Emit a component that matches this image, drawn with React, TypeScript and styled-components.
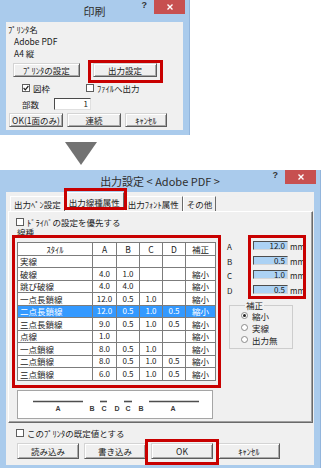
import React from "react";
import styled, { createGlobalStyle } from "styled-components";

const FRAME = "#aacbec";
const FACE = "#f0f0f0";
const MARK = "#c80000";

const GlobalStyle = createGlobalStyle`
  * { box-sizing: border-box; }
  html, body { margin: 0; padding: 0; background: #ffffff; }
  body {
    font-family: "Noto Sans CJK JP", "Noto Sans", sans-serif;
    font-size: 8.5px;
    color: #1b1b1b;
  }
`;

interface LineRow {
  name: string;
  vals: string[];
  fix: string;
  sel?: boolean;
}

const lineRows: LineRow[] = [
  { name: "実線", vals: ["", "", "", ""], fix: "" },
  { name: "破線", vals: ["4.0", "1.0", "", ""], fix: "縮小" },
  { name: "跳び破線", vals: ["4.0", "4.0", "", ""], fix: "縮小" },
  { name: "一点長鎖線", vals: ["12.0", "0.5", "1.0", ""], fix: "縮小" },
  { name: "二点長鎖線", vals: ["12.0", "0.5", "1.0", "0.5"], fix: "縮小", sel: true },
  { name: "三点長鎖線", vals: ["9.0", "0.5", "1.0", "0.5"], fix: "縮小" },
  { name: "点線", vals: ["1.0", "", "", ""], fix: "縮小" },
  { name: "一点鎖線", vals: ["8.0", "0.5", "1.0", ""], fix: "縮小" },
  { name: "二点鎖線", vals: ["8.0", "0.5", "1.0", "0.5"], fix: "縮小" },
  { name: "三点鎖線", vals: ["6.0", "0.5", "1.0", "0.5"], fix: "縮小" },
];

const sizes = [
  { key: "A", value: "12.0" },
  { key: "B", value: "0.5" },
  { key: "C", value: "1.0" },
  { key: "D", value: "0.5" },
];

const App: React.FC = () => {
  return (
    <>
      <GlobalStyle />
      <Page>
        <PrintDialog />
        <ArrowZone>
          <DownArrow />
        </ArrowZone>
        <OutputDialog />
      </Page>
    </>
  );
};

const WindowTitle = ({ text }: { text: string }) => (
  <TitleBar>
    <Title>{text}</Title>
    <Controls>
      <Help>?</Help>
      <CloseButton>
        <svg width="6" height="6" viewBox="0 0 6 6">
          <path d="M0.5 0.5 L5.5 5.5 M5.5 0.5 L0.5 5.5" stroke="#fff" strokeWidth="1.4" />
        </svg>
      </CloseButton>
    </Controls>
  </TitleBar>
);

const Check = ({ on }: { on?: boolean }) => (
  <Box>
    {on && (
      <svg width="6" height="6" viewBox="0 0 6 6">
        <path d="M0.6 3 L2.3 4.8 L5.4 1" fill="none" stroke="#222" strokeWidth="1.2" />
      </svg>
    )}
  </Box>
);

const PrintDialog = () => (
  <Window $width={190} $height={135}>
    <WindowTitle text="印刷" />
    <PrintBody $bottom={5}>
      <TextLine>ﾌﾟﾘﾝﾀ名</TextLine>
      <TextLine $indent={6}>Adobe PDF</TextLine>
      <TextLine $indent={6}>A4 縦</TextLine>
      <ButtonRow $gap={13} $indent={5} $top={4}>
        <Button $w={67}>ﾌﾟﾘﾝﾀの設定</Button>
        <Marked $t={3} $r={6} $b={6} $l={5}>
          <Button $w={64}>出力設定</Button>
        </Marked>
      </ButtonRow>
      <CheckRow>
        <CheckItem>
          <Check on />
          <span>図枠</span>
        </CheckItem>
        <CheckItem>
          <Check />
          <span>ﾌｧｲﾙへ出力</span>
        </CheckItem>
      </CheckRow>
      <CopiesRow>
        <span>部数</span>
        <CopiesInput>1</CopiesInput>
      </CopiesRow>
      <ButtonRow $gap={4} $indent={1} $top={3}>
        <Button $w={54}>OK(1面のみ)</Button>
        <Button $w={54}>連続</Button>
        <Button $w={42}>ｷｬﾝｾﾙ</Button>
      </ButtonRow>
    </PrintBody>
  </Window>
);

const LineTypeTable = () => (
  <Grid>
    <colgroup>
      <col style={{ width: 75 }} />
      <col style={{ width: 24 }} />
      <col style={{ width: 23 }} />
      <col style={{ width: 23 }} />
      <col style={{ width: 23 }} />
      <col style={{ width: 30 }} />
    </colgroup>
    <thead>
      <tr>
        {["ｽﾀｲﾙ", "A", "B", "C", "D", "補正"].map((h) => (
          <Cell key={h} $align="center">
            {h}
          </Cell>
        ))}
      </tr>
    </thead>
    <tbody>
      {lineRows.map((row) => (
        <tr key={row.name}>
          <Cell $align="left" $sel={row.sel}>
            {row.name}
          </Cell>
          {row.vals.map((v, i) => (
            <Cell key={i} $align="center" $sel={row.sel} $num>
              {v}
            </Cell>
          ))}
          <Cell $align="center" $sel={row.sel}>
            {row.fix}
          </Cell>
        </tr>
      ))}
    </tbody>
  </Grid>
);

const DashPreview = () => (
  <PreviewBox>
    <svg width="194" height="27" viewBox="0 0 194 27">
      <g stroke="#4e4e4e" strokeWidth="1.6">
        <line x1="15" y1="10.5" x2="65" y2="10.5" />
        <line x1="82" y1="10.5" x2="89" y2="10.5" />
        <line x1="106" y1="10.5" x2="114" y2="10.5" />
        <line x1="131" y1="10.5" x2="181" y2="10.5" />
      </g>
      <g fill="#3a3a3a" fontSize="7" fontFamily="Liberation Sans, sans-serif" fontWeight="bold" textAnchor="middle">
        <text x="40" y="20">A</text>
        <text x="74" y="20">B</text>
        <text x="86" y="20">C</text>
        <text x="99" y="20">D</text>
        <text x="110" y="20">C</text>
        <text x="123" y="20">B</text>
        <text x="155" y="20">A</text>
      </g>
    </svg>
  </PreviewBox>
);

const OutputDialog = () => (
  <Window $width={321} $height={298}>
    <WindowTitle text="出力設定 < Adobe PDF >" />
    <Body $bottom={3}>
      <TabStrip>
        <Tab>出力ﾍﾟﾝ設定</Tab>
        <Marked $t={4} $r={3} $b={1} $l={1}>
          <Tab $active>出力線種属性</Tab>
        </Marked>
        <Tab>出力ﾌｫﾝﾄ属性</Tab>
        <Tab>その他</Tab>
      </TabStrip>
      <Panel>
        <CheckItem $indent={7} $top={5}>
          <Check />
          <span>ﾄﾞﾗｲﾊﾞの設定を優先する</span>
        </CheckItem>
        <GroupLabel>線種</GroupLabel>
        <MainArea>
          <LeftColumn>
            <Marked $t={7} $r={5} $b={7} $l={5}>
              <LineTypeTable />
            </Marked>
            <DashPreview />
          </LeftColumn>
          <RightColumn>
            <SizeBlock>
              <SizeLabels>
                {sizes.map((s) => (
                  <SizeLabel key={s.key}>{s.key}</SizeLabel>
                ))}
              </SizeLabels>
              <Marked $t={6} $r={1} $b={5} $l={5}>
                <SizeFields>
                  {sizes.map((s) => (
                    <SizeRow key={s.key}>
                      <SizeInput>{s.value}</SizeInput>
                      <Unit>mm</Unit>
                    </SizeRow>
                  ))}
                </SizeFields>
              </Marked>
            </SizeBlock>
            <FixGroup>
              <legend>補正</legend>
              {["縮小", "実線", "出力無"].map((label, i) => (
                <RadioRow key={label}>
                  <RadioDot>{i === 0 && <RadioInner />}</RadioDot>
                  <span>{label}</span>
                </RadioRow>
              ))}
            </FixGroup>
          </RightColumn>
        </MainArea>
      </Panel>
      <CheckItem $indent={10} $top={5}>
        <Check />
        <span>このﾌﾟﾘﾝﾀの既定値とする</span>
      </CheckItem>
      <ButtonRow $gap={5} $indent={11} $top={5}>
        <Button $w={62} $h={16}>読み込み</Button>
        <Button $w={62} $h={16}>書き込み</Button>
        <Marked $t={4} $r={6} $b={6} $l={6}>
          <Button $w={62} $h={16}>OK</Button>
        </Marked>
        <Button $w={62} $h={16}>ｷｬﾝｾﾙ</Button>
      </ButtonRow>
    </Body>
  </Window>
);

export default App;

const Page = styled.div`
  width: 321px;
  height: 468px;
  overflow: hidden;
  display: flex;
  flex-direction: column;
  background: #fff;
`;

const Window = styled.div<{ $width: number; $height: number }>`
  width: ${({ $width }) => $width}px;
  height: ${({ $height }) => $height}px;
  flex: none;
  display: flex;
  flex-direction: column;
  background: ${FRAME};
  border-right: 1px solid #92b5dc;
`;

const TitleBar = styled.div`
  height: 22px;
  flex: none;
  display: grid;
  grid-template-columns: 1fr auto 1fr;
  align-items: center;
`;

const Title = styled.div`
  grid-column: 2;
  font-size: 11px;
  color: #2e2e2e;
  white-space: nowrap;
`;

const Controls = styled.div`
  grid-column: 3;
  justify-self: end;
  align-self: start;
  display: flex;
  align-items: flex-start;
  gap: 7px;
  padding-right: 4px;
`;

const Help = styled.span`
  font: bold 9px/11px "Liberation Sans", sans-serif;
  color: #333;
`;

const CloseButton = styled.div`
  width: 31px;
  height: 14px;
  background: #c75050;
  display: flex;
  align-items: center;
  justify-content: center;
`;

const Body = styled.div<{ $bottom: number }>`
  flex: 1;
  min-height: 0;
  margin: 0 6px ${({ $bottom }) => $bottom}px 6px;
  background: ${FACE};
  display: flex;
  flex-direction: column;
`;

const PrintBody = styled(Body)`
  padding: 1px 0 0 2px;
`;

const TextLine = styled.div<{ $indent?: number }>`
  height: 12px;
  line-height: 12px;
  padding-left: ${({ $indent }) => $indent || 0}px;
  white-space: nowrap;
`;

const ButtonRow = styled.div<{ $gap: number; $indent: number; $top: number }>`
  display: flex;
  gap: ${({ $gap }) => $gap}px;
  margin-top: ${({ $top }) => $top}px;
  padding-left: ${({ $indent }) => $indent}px;
`;

const Button = styled.div<{ $w: number; $h?: number }>`
  width: ${({ $w }) => $w}px;
  height: ${({ $h }) => $h ?? 14}px;
  flex: none;
  display: flex;
  align-items: center;
  justify-content: center;
  white-space: nowrap;
  line-height: 10px;
  background: #efefef;
  border: 1px solid;
  border-color: #d4d4d4 #5c5c5c #5c5c5c #d4d4d4;
  box-shadow: inset 1px 1px 0 #fff, inset -1px -1px 0 #a9a9a9;
`;

const Marked = styled.div<{ $t: number; $r: number; $b: number; $l: number }>`
  position: relative;
  display: flex;
  flex: none;
  align-self: flex-start;
  &::after {
    content: "";
    position: absolute;
    top: ${({ $t }) => -$t}px;
    right: ${({ $r }) => -$r}px;
    bottom: ${({ $b }) => -$b}px;
    left: ${({ $l }) => -$l}px;
    border: 3px solid ${MARK};
    pointer-events: none;
    z-index: 2;
  }
`;

const CheckRow = styled.div`
  display: grid;
  grid-template-columns: 64px auto;
  margin-top: 6px;
  padding-left: 14px;
  height: 10px;
`;

const CheckItem = styled.div<{ $indent?: number; $top?: number }>`
  display: flex;
  align-items: center;
  gap: 3px;
  height: 10px;
  line-height: 10px;
  white-space: nowrap;
  padding-left: ${({ $indent }) => $indent || 0}px;
  margin-top: ${({ $top }) => $top || 0}px;
`;

const Box = styled.span`
  width: 8px;
  height: 8px;
  flex: none;
  background: #fff;
  border: 1px solid #5e5e5e;
  display: inline-flex;
  align-items: center;
  justify-content: center;
`;

const CopiesRow = styled.div`
  display: flex;
  align-items: center;
  gap: 15px;
  margin-top: 4px;
  padding-left: 14px;
  height: 13px;
  line-height: 10px;
`;

const CopiesInput = styled.div`
  width: 37px;
  height: 12px;
  background: #fff;
  border: 1px solid;
  border-color: #4a4a4a #e0e0e0 #e0e0e0 #4a4a4a;
  text-align: right;
  padding-right: 2px;
  font-size: 8px;
  line-height: 10px;
`;

const ArrowZone = styled.div`
  height: 35px;
  flex: none;
  padding: 7px 0 0 65px;
`;

const DownArrow = styled.div`
  width: 32px;
  height: 23px;
  background: #727272;
  clip-path: polygon(0 0, 100% 0, 50% 100%);
`;

const TabStrip = styled.div`
  height: 19px;
  flex: none;
  display: flex;
  align-items: flex-end;
  padding-left: 4px;
`;

const Tab = styled.div<{ $active?: boolean }>`
  height: ${({ $active }) => ($active ? 18 : 15)}px;
  padding: 0 3px;
  display: flex;
  align-items: center;
  line-height: 10px;
  white-space: nowrap;
  background: ${FACE};
  border-top: 1px solid #fff;
  border-left: 1px solid #fff;
  border-right: 1px solid #6a6a6a;
  position: relative;
  z-index: ${({ $active }) => ($active ? 1 : 0)};
  margin-bottom: ${({ $active }) => ($active ? -1 : 0)}px;
`;

const Panel = styled.div`
  height: 212px;
  flex: none;
  margin: 0 1px 0 2px;
  border: 1px solid;
  border-color: #fff #6a6a6a #6a6a6a #fff;
  box-shadow: inset -1px -1px 0 #a0a0a0;
  display: flex;
  flex-direction: column;
`;

const GroupLabel = styled.div`
  height: 9px;
  line-height: 9px;
  margin-top: 1px;
  padding-left: 8px;
`;

const MainArea = styled.div`
  display: flex;
  gap: 11px;
  margin-top: 5px;
  padding-left: 8px;
`;

const LeftColumn = styled.div`
  display: flex;
  flex-direction: column;
  gap: 9px;
`;

const Grid = styled.table`
  border-collapse: collapse;
  table-layout: fixed;
  width: 198px;
  background: #fff;
  border: 1px solid #4f4f4f;
`;

const Cell = styled.td<{ $align: string; $sel?: boolean; $num?: boolean }>`
  height: 12.5px;
  padding: 0 2px;
  border: 1px solid #7c7c7c;
  text-align: ${({ $align }) => $align};
  line-height: 10px;
  font-size: ${({ $num }) => ($num ? 8 : 8.5)}px;
  white-space: nowrap;
  overflow: hidden;
  background: ${({ $sel }) => ($sel ? "#3399ff" : "#fff")};
  color: ${({ $sel }) => ($sel ? "#fff" : "#1b1b1b")};
`;

const PreviewBox = styled.div`
  width: 196px;
  height: 29px;
  background: #fff;
  border: 1px solid #a5a5a5;
`;

const RightColumn = styled.div`
  display: flex;
  flex-direction: column;
  margin-top: -1px;
`;

const SizeBlock = styled.div`
  display: flex;
`;

const SizeLabels = styled.div`
  width: 26px;
  display: flex;
  flex-direction: column;
  gap: 5.5px;
`;

const SizeLabel = styled.div`
  height: 9px;
  line-height: 9px;
  font-size: 8px;
  padding-top: 1px;
`;

const SizeFields = styled.div`
  display: flex;
  flex-direction: column;
  gap: 5.5px;
`;

const SizeRow = styled.div`
  display: flex;
  align-items: center;
  gap: 2px;
  height: 9px;
`;

const SizeInput = styled.div`
  width: 35px;
  height: 9px;
  background: #acd2f4;
  border: 1px solid;
  border-color: #4d4d4d #d6d6d6 #d6d6d6 #4d4d4d;
  text-align: right;
  padding-right: 2px;
  font-size: 8px;
  line-height: 7px;
`;

const Unit = styled.span`
  font-size: 8px;
  line-height: 9px;
  padding-top: 2px;
`;

const FixGroup = styled.fieldset`
  width: 64px;
  height: 48px;
  margin: 7px 0 0 2px;
  padding: 1px 0 0 11px;
  border: 1px solid #cdcdcd;
  display: flex;
  flex-direction: column;
  gap: 2px;
  legend {
    padding: 0 1px;
    margin-left: 4px;
    line-height: 9px;
  }
`;

const RadioRow = styled.div`
  display: flex;
  align-items: center;
  gap: 4px;
  height: 10px;
  line-height: 10px;
`;

const RadioDot = styled.span`
  width: 7px;
  height: 7px;
  flex: none;
  border-radius: 50%;
  border: 1px solid #8a8a8a;
  background: #fff;
  display: inline-flex;
  align-items: center;
  justify-content: center;
`;

const RadioInner = styled.span`
  width: 3px;
  height: 3px;
  border-radius: 50%;
  background: #222;
`;
